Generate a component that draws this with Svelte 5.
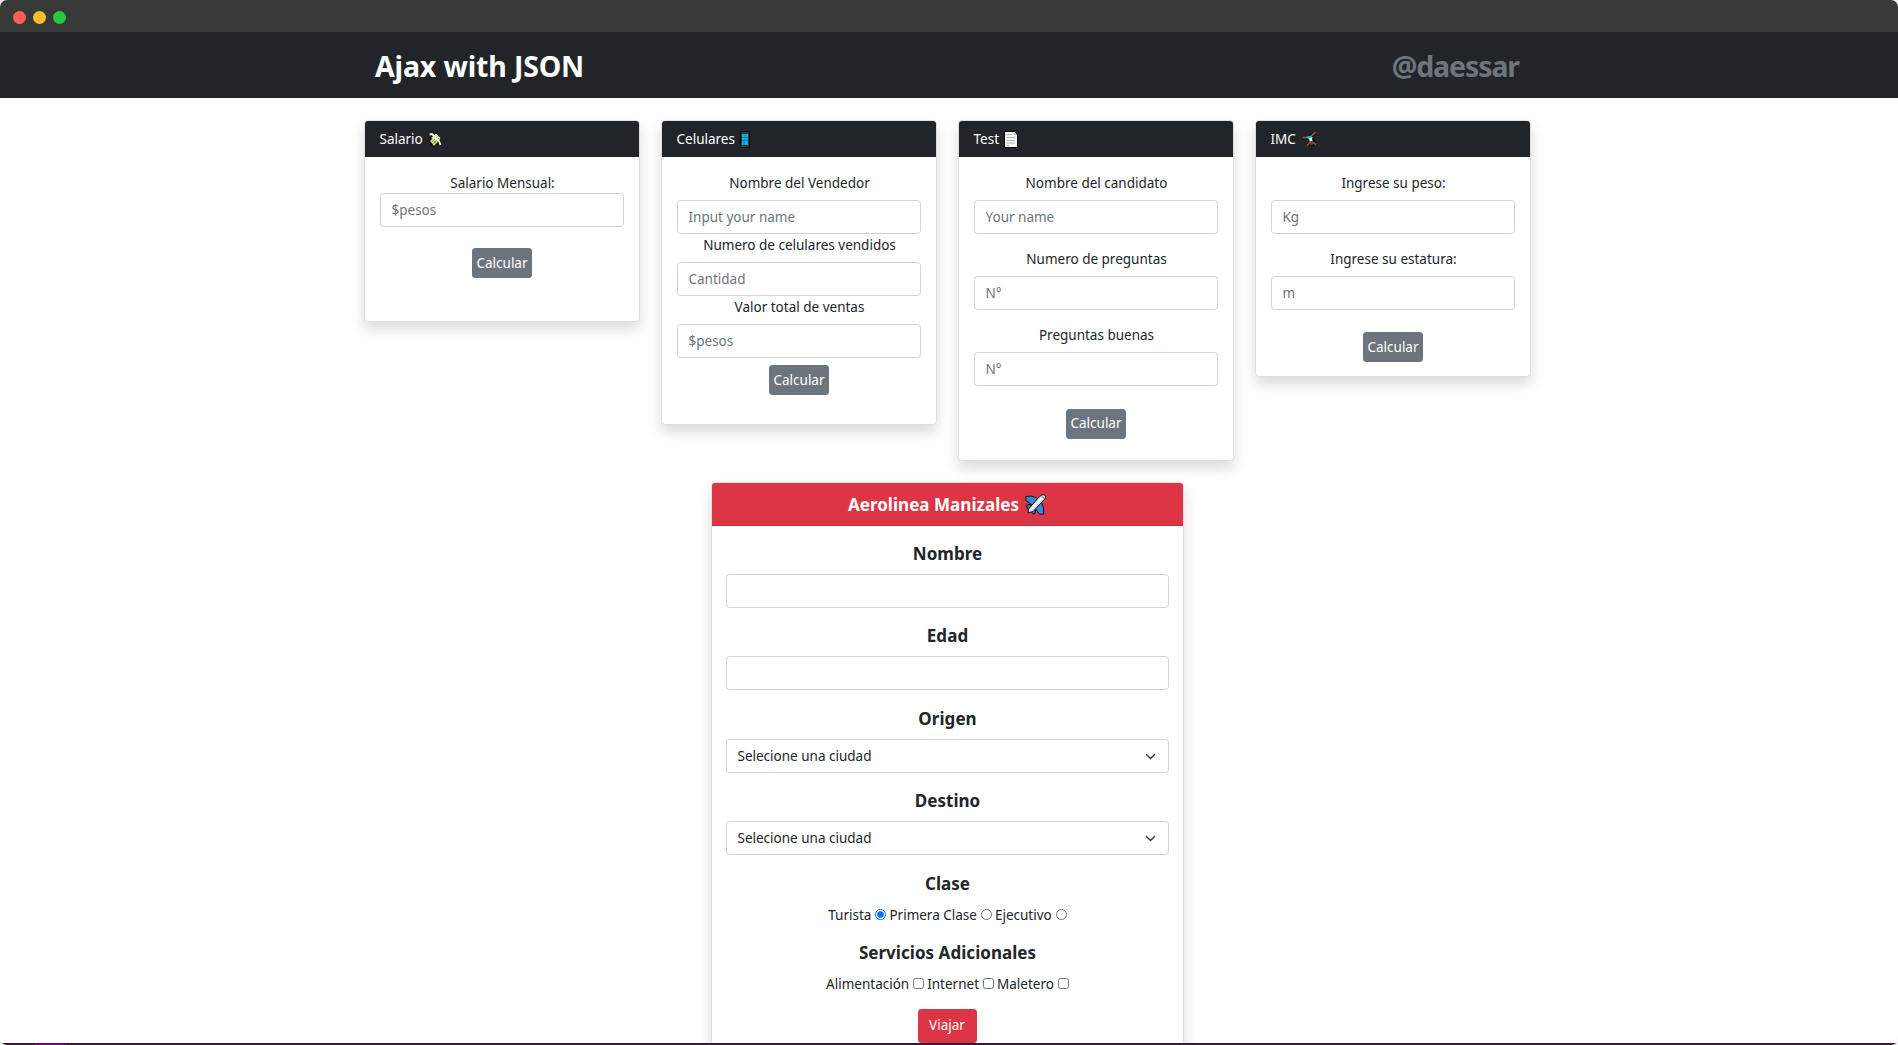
<script>
  const cards = [
    {
      title: 'Salario', icon: 'money', kind: 'salary',
      fields: [{ label: 'Salario Mensual:', hint: '$pesos' }]
    },
    {
      title: 'Celulares', icon: 'phone', kind: 'phones',
      fields: [
        { label: 'Nombre del Vendedor', hint: 'Input your name' },
        { label: 'Numero de celulares vendidos', hint: 'Cantidad' },
        { label: 'Valor total de ventas', hint: '$pesos' }
      ]
    },
    {
      title: 'Test', icon: 'page', kind: 'test',
      fields: [
        { label: 'Nombre del candidato', hint: 'Your name' },
        { label: 'Numero de preguntas', hint: 'N°' },
        { label: 'Preguntas buenas', hint: 'N°' }
      ]
    },
    {
      title: 'IMC', icon: 'cartwheel', kind: 'imc',
      fields: [
        { label: 'Ingrese su peso:', hint: 'Kg' },
        { label: 'Ingrese su estatura:', hint: 'm' }
      ]
    }
  ];
  const classes = ['Turista', 'Primera Clase', 'Ejecutivo'];
  const extras = ['Alimentación', 'Internet', 'Maletero'];
  let chosen = $state('Turista');
</script>

<div class="window">
  <div class="titlebar">
    <span class="dot red"></span><span class="dot yellow"></span><span class="dot green"></span>
  </div>

  <header>
    <h1>Ajax with JSON</h1>
    <span class="handle">@daessar</span>
  </header>

  <main>
    <div class="cards">
      {#each cards as card}
        <section class="card {card.kind}">
          <div class="card-head">
            <span>{card.title}</span>
            {#if card.icon === 'money'}
              <svg class="icon" width="14" height="16" viewBox="0 0 14 16">
                <path d="M.5 2 3 .5 6 2 8 .5 13.500 7 11 12 5.500 15.500 1 10 1.500 6Z" fill="#111" />
                <path d="M2 9 8 2.500 12.500 7 6 14Z" fill="#c8d878" />
                <path d="M3 6 8 1.500 12.500 6 9 9Z" fill="#e2e4b0" />
                <path d="M3.500 10.500 9.500 4.500M5 12 11 6M5 8 8 11" stroke="#8c9f4c" stroke-width="1" />
                <path d="M1.500 2.500 4 2 7 5 8 7M8 7 11 9 12.500 13" stroke="#f4f4f4" stroke-width="1.800" fill="none" />
              </svg>
            {:else if card.icon === 'phone'}
              <svg class="icon" width="10" height="17" viewBox="0 0 10 17">
                <rect x=".5" y=".5" width="9" height="16" rx="1" fill="#333" stroke="#050505" />
                <rect x="2" y="3" width="6" height="11" fill="#00b4ee" />
                <path d="M2 6.500H8M2 9.500H8M5 3V9M4 10V14" stroke="#0878a3" stroke-width=".8" />
              </svg>
            {:else if card.icon === 'page'}
              <svg class="icon" width="14" height="17" viewBox="0 0 14 17">
                <path d="M.5 .5H10.500L13.500 4V16.500H.5Z" fill="#f5f5f5" stroke="#080808" />
                <path d="M10 1V4H13" fill="#bbb" />
                <path d="M2.500 3.500H8M2.500 6.500H11M2.500 9.500H11M2.500 12H11M2.500 14.500H5" stroke="#b7b7b7" stroke-width="1" />
              </svg>
            {:else}
              <svg class="icon" width="17" height="17" viewBox="0 0 17 17">
                <path d="M1.500 6.500H7L14 2M10 7 15 13M9 11 7 15M10 12 13 14" stroke="#080808" stroke-width="3.500" fill="none" />
                <path d="M1.500 6.500H7M10 5 14.500 1.500M10 10 15 13.500M9 11 6 15" stroke="#8d5939" stroke-width="1.800" fill="none" />
                <path d="M5 6 9 4.500 12 6.500 9.500 9.500Z" fill="#22b5eb" />
                <path d="M8 7.500 11 6.500 11.500 10 9 11Z" fill="#f2f2f2" />
                <circle cx="10.500" cy="12" r="2" fill="#744329" />
              </svg>
            {/if}
          </div>
          <div class="card-body">
            {#each card.fields as field}
              <label class="field">
                <span>{field.label}</span>
                <input type="text" placeholder={field.hint} />
              </label>
            {/each}
            <button class="calc">Calcular</button>
          </div>
        </section>
      {/each}
    </div>

    <section class="airline">
      <div class="airline-head">
        <h2>Aerolinea Manizales</h2>
        <svg width="21" height="21" viewBox="0 0 21 21">
          <g stroke="#141414" stroke-width="1" stroke-linejoin="round">
            <path d="M.8 2.500 6 2 14.500 5 8.500 12 1 6.500Z" fill="#3788d8" />
            <path d="M16 6.500 18.500 14 18.800 20 14.500 20.300 9 12.500Z" fill="#3788d8" />
            <path d="M1 11.500 4 10.500 8 12 10 14 10.500 18 9 20.300 6 18 2.500 15Z" fill="#2c76c7" />
            <path d="M3.500 15 14 3Q17 .3 19 .7 21.500 1.500 19.800 5L8 17.500 3 18.800Z" fill="#d3e0eb" />
          </g>
          <path d="M5.500 16 17 4" stroke="#f5fafd" stroke-width="2" />
          <path d="M16.500 2.500 19 4.500" stroke="#5aa2bd" stroke-width="1.200" />
        </svg>
      </div>
      <div class="airline-body">
        <div class="group"><h3>Nombre</h3><input type="text" aria-label="Nombre" /></div>
        <div class="group"><h3>Edad</h3><input type="text" aria-label="Edad" /></div>
        {#each ['Origen', 'Destino'] as place}
          <div class="group">
            <h3>{place}</h3>
            <div class="select" role="button" tabindex="0">
              <span>Selecione una ciudad</span>
              <svg width="11" height="11" viewBox="0 0 16 16" fill="none" stroke="#343a40" stroke-width="2" stroke-linecap="round" stroke-linejoin="round"><path d="m2 5 6 6 6-6" /></svg>
            </div>
          </div>
        {/each}
        <h3>Clase</h3>
        <div class="options radios">
          {#each classes as name}
            <label><span>{name}</span><input type="radio" name="clase" value={name} bind:group={chosen} /></label>
          {/each}
        </div>
        <h3>Servicios Adicionales</h3>
        <div class="options checks">
          {#each extras as name}
            <label><span>{name}</span><input type="checkbox" /></label>
          {/each}
        </div>
        <button class="travel">Viajar</button>
      </div>
    </section>
  </main>
  <div class="taskbar"><span></span></div>
</div>

<style>
  :global(body) { background: #eee; overflow: hidden; }
  * { box-sizing: border-box; }
  .window {
    width: 100%; height: 1045px; display: flex; flex-direction: column;
    overflow: hidden; border-radius: 7px; background: #fff; color: #212529;
    font: 13.5px/21px "Noto Sans", sans-serif;
  }
  .titlebar { flex: none; height: 32px; background: #383939; display: flex; align-items: center; gap: 7px; padding: 2px 0 0 13px; }
  .dot { width: 13px; height: 13px; border-radius: 50%; }
  .red { background: #ff5f57; }
  .yellow { background: #febc2e; }
  .green { background: #28c840; }
  header { flex: none; height: 66px; background: #212529; display: flex; align-items: center; justify-content: space-between; padding: 1px 379px 0 375px; }
  h1, .handle { margin: 0; font-size: 28.500px; line-height: 34px; font-weight: 700; letter-spacing: -.15px; }
  h1 { color: #fff; }
  .handle { color: #6c757d; letter-spacing: -1.100px; }
  main { flex: 1; min-height: 0; overflow: hidden; padding-top: 22px; display: flex; flex-direction: column; align-items: center; }
  .cards { width: 1167px; flex: none; display: grid; grid-template-columns: repeat(4, 276px); column-gap: 21px; align-items: start; height: 362px; margin-left: -3px; }
  .card, .airline { border: 1px solid #dfdfdf; border-radius: 4px; background: #fff; box-shadow: 0 7px 14px rgba(0,0,0,.15); }
  .card-head { height: 36px; background: #212529; color: #fff; border-radius: 3px 3px 0 0; padding: 1px 14.500px 0; display: flex; align-items: center; gap: 5px; }
  .card-body { padding: 15px 15px 0; display: flex; flex-direction: column; align-items: center; }
  .field { width: 100%; display: flex; flex-direction: column; text-align: center; gap: 7px; }
  .field > span { height: 21px; line-height: 23px; padding-left: 1px; }
  input[type="text"] { width: 100%; height: 34px; border: 1px solid #ced4da; border-radius: 3.500px; background: #fff; padding: 0 10.500px; font: inherit; color: #212529; }
  input::placeholder { color: #6c757d; opacity: 1; }
  button { border: 0; border-radius: 3.500px; color: #fff; font: inherit; padding: 0; }
  .calc { width: 60px; height: 30px; background: #6c757d; }
  .salary { height: 202px; }
  .salary .field { gap: 0; }
  .salary .calc { margin-top: 21px; }
  .phones { height: 305px; }
  .phones .calc { margin-top: 7px; }
  .test { height: 341px; }
  .imc { height: 257px; }
  .test .card-body, .imc .card-body { gap: 14.200px; }
  .test .calc, .imc .calc { margin-top: 8px; }
  .airline { flex: none; width: 473px; height: 620px; margin-left: -4px; }
  .airline-head { height: 43px; background: #dc3545; border-bottom: 1px solid #bd2d3b; border-radius: 3px 3px 0 0; color: #fff; display: flex; align-items: center; justify-content: center; gap: 6px; }
  h2, h3 { margin: 0; font-size: 17px; line-height: 21px; font-weight: 700; letter-spacing: .04px; }
  h3 { padding-left: 1px; }
  .airline-body { padding: 17px 14px 0; display: flex; flex-direction: column; align-items: center; text-align: center; }
  .group { width: 100%; display: flex; flex-direction: column; gap: 10px; margin-bottom: 17.400px; }
  .select { height: 34px; border: 1px solid #ced4da; border-radius: 3.500px; padding: 1px 12px 0 11px; display: flex; align-items: center; justify-content: space-between; }
  .options { display: flex; justify-content: center; gap: 3px; margin: 11px 0 16px; padding-left: 1px; }
  .options label { display: flex; align-items: center; gap: 4px; }
  .options input { width: 11px; height: 11px; margin: 0 0 1px; }
  .checks { margin-bottom: 14px; }
  .travel { width: 59px; height: 34px; background: #dc3545; }
  .taskbar { flex: none; height: 2px; background: #3b183b; padding-left: 35px; }
  .taskbar span { display: block; width: 32px; height: 2px; background: #6c086b; }
</style>
